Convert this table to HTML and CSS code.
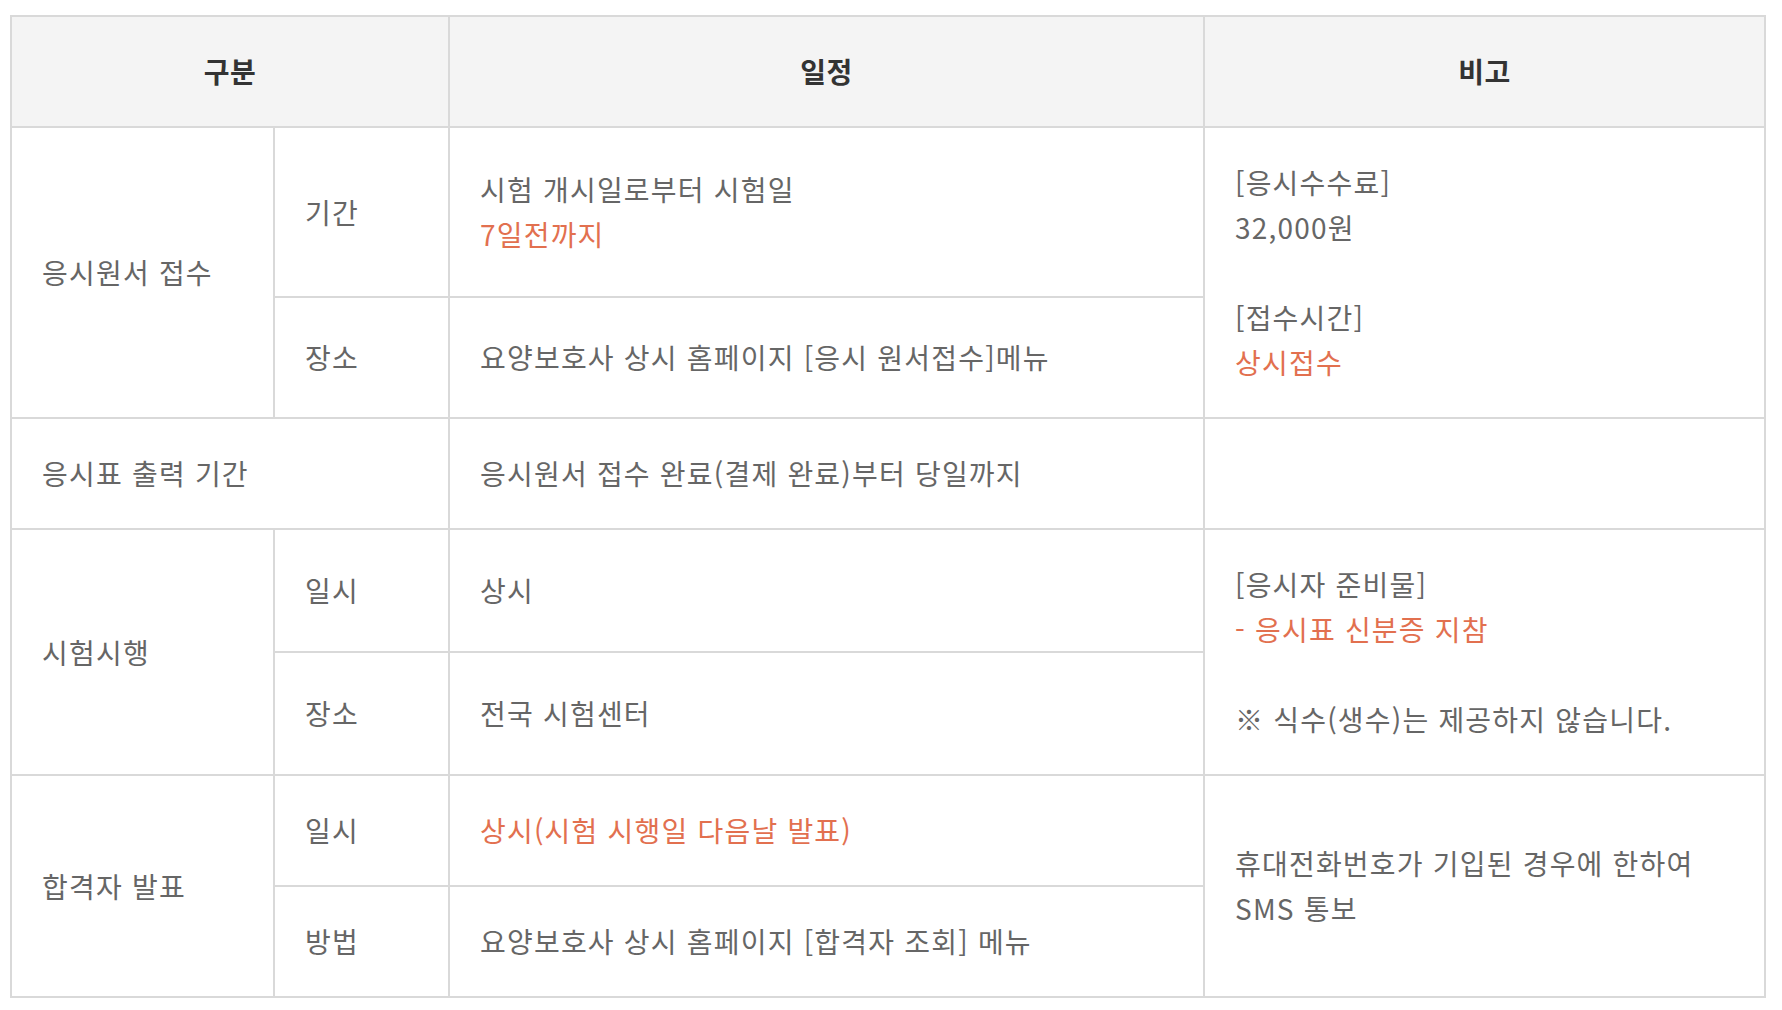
FILE: index.html
```html
<!DOCTYPE html>
<html lang="ko">
<head>
<meta charset="utf-8">
<title>시험 일정</title>
<link rel="stylesheet" href="styles.css">
</head>
<body>
<div class="wrap">
<table class="schedule">
  <colgroup>
    <col class="c1">
    <col class="c2">
    <col class="c3">
    <col class="c4">
  </colgroup>
  <thead>
    <tr>
      <th colspan="2">구분</th>
      <th>일정</th>
      <th>비고</th>
    </tr>
  </thead>
  <tbody>
    <tr>
      <td rowspan="2">응시원서 접수</td>
      <td>기간</td>
      <td>시험 개시일로부터 시험일<br><span class="em">7일전까지</span></td>
      <td rowspan="2">[응시수수료]<br>32,000원<br><br>[접수시간]<br><span class="em">상시접수</span></td>
    </tr>
    <tr>
      <td>장소</td>
      <td>요양보호사 상시 홈페이지 [응시 원서접수]메뉴</td>
    </tr>
    <tr>
      <td colspan="2">응시표 출력 기간</td>
      <td>응시원서 접수 완료(결제 완료)부터 당일까지</td>
      <td></td>
    </tr>
    <tr>
      <td rowspan="2">시험시행</td>
      <td>일시</td>
      <td>상시</td>
      <td rowspan="2">[응시자 준비물]<br><span class="em">- 응시표 신분증 지참</span><br><br>※ 식수(생수)는 제공하지 않습니다.</td>
    </tr>
    <tr>
      <td>장소</td>
      <td>전국 시험센터</td>
    </tr>
    <tr>
      <td rowspan="2">합격자 발표</td>
      <td>일시</td>
      <td><span class="em">상시(시험 시행일 다음날 발표)</span></td>
      <td rowspan="2">휴대전화번호가 기입된 경우에 한하여<br>SMS 통보</td>
    </tr>
    <tr>
      <td>방법</td>
      <td>요양보호사 상시 홈페이지 [합격자 조회] 메뉴</td>
    </tr>
  </tbody>
</table>
</div>
</body>
</html>
```
FILE: styles.css
```css
html, body {
  margin: 0;
  padding: 0;
  background: #ffffff;
}

.wrap {
  padding: 15px 10px;
}

.schedule {
  width: 1756px;
  border-collapse: collapse;
  table-layout: fixed;
  font-family: "Noto Sans CJK KR", "Noto Sans", sans-serif;
  font-size: 28px;
  line-height: 45px;
  color: #666666;
  letter-spacing: 1.2px;
}

.c1 { width: 263px; }
.c2 { width: 175px; }
.c3 { width: 755px; }
.c4 { width: 561px; }

.schedule th,
.schedule td {
  border: 2px solid #d9d9d9;
  padding: 32px 30px;
  vertical-align: middle;
  text-align: left;
  font-weight: 400;
}

.schedule th {
  background: #f4f4f4;
  color: #333333;
  font-weight: 700;
  text-align: center;
  letter-spacing: 0.5px;
}

.em {
  color: #e2704f;
}
```
